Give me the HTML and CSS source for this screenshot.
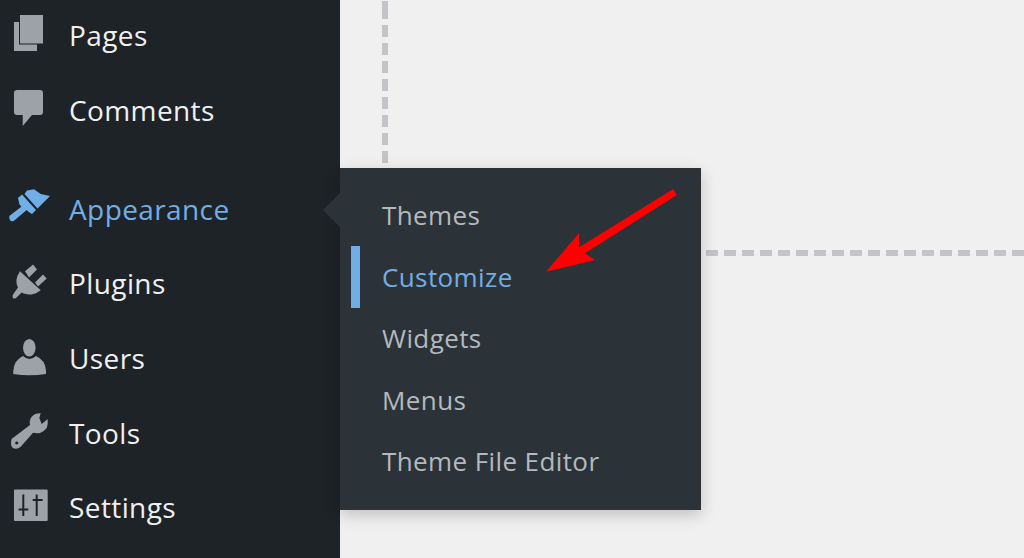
FILE: index.html

```html
<!DOCTYPE html>
<html lang="en">
<head>
  <meta charset="UTF-8">
  <title>Appearance menu</title>
  <link rel="stylesheet" href="styles.css">
</head>
<body>
  <div class="admin">
    <nav class="sidebar">
      <ul class="menu">
        <li class="item">
          <svg class="icon" viewBox="0 0 40 40"><path d="M10 0h23v28.500H10z"/><path d="M4 7h5v22.500h18V36H4z"/></svg>
          Pages
        </li>
        <li class="item sep">
          <svg class="icon" viewBox="0 0 40 40"><path d="M7 0h23q3 0 3 3v19q0 3-3 3H22L12.700 36V25H7q-3 0-3-3V3q0-3 3-3z"/></svg>
          Comments
        </li>
        <li class="item current">
          <svg class="icon" viewBox="0 0 40 40"><path d="M14.500 5L17 1.500 24 .3 30.700 5 40 7 27.500 19.500z"/><path d="M8 9l4-3.500L26 21l-4 4-3.300-2-2-2L4 31.700Q1 33 0 31q-1-2-.7-4l12-9.300-2-2.700z"/></svg>
          Appearance
        </li>
        <li class="item">
          <svg class="icon" viewBox="0 0 40 40"><path d="M15 8.200L23 1.500l4 5L19 14.500z"/><path d="M25 19.500l8-8 3.700 4-8.700 8z"/><path d="M10 8.200l20.700 19q-4.700 3.800-9 4.300-6.700 0-10-2L6 35q-2 1-3 0-1-2 0-3.500l5-7q-4-7.500 2-16.300z"/></svg>
          Plugins
        </li>
        <li class="item">
          <svg class="icon" viewBox="0 0 40 40"><ellipse cx="19.300" cy="9.800" rx="6.300" ry="8.800"/><path d="M13 18q6.500 6 13 0 9.500 4 10 15v3q-16.500 2.500-32.700 0v-3q.7-11 9.700-15z"/></svg>
          Users
        </li>
        <li class="item">
          <svg class="icon" viewBox="0 0 40 40"><path fill-rule="evenodd" d="M1.500 26L20 12q-1-5 1.700-8.300Q25 0 30.700.3L29.300 5l2.400 6 6-5q.5 5-1 9-2 3-6.700 5-3.500.5-7-.3L10.700 33.700Q7 37 3 35q-3-2-1.500-9zM6.700 28.400a1.600 1.600 0 1 0 .1 0z"/></svg>
          Tools
        </li>
        <li class="item">
          <svg class="icon" viewBox="0 0 40 40"><path fill-rule="evenodd" d="M5 2.500h31.700q1 0 1 1V33q0 1-1 1H5q-1 0-1-1V3.500q0-1 1-1zM12.300 7.500v14H8.500v2h3.800V29h2v-5.500h4v-2h-4v-14zM25.700 7.500V12h-3v2h3v15h2V14h5v-2h-5V7.500z"/></svg>
          Settings
        </li>
      </ul>
    </nav>
    <main class="content">
      <div class="dash-v"></div>
      <div class="dash-h"></div>
    </main>

    <div class="flyout">
      <ul class="submenu">
        <li class="subitem">Themes</li>
        <li class="subitem active">Customize</li>
        <li class="subitem">Widgets</li>
        <li class="subitem">Menus</li>
        <li class="subitem">Theme File Editor</li>
      </ul>
    </div>

    <svg class="red-arrow" viewBox="0 0 140 90"><polygon points="127.300,1 130.700,7 39,65.300 49,72 0,83.700 33,45.300 33,59.300"/></svg>
  </div>
</body>
</html>
```

FILE: styles.css

```css
* { box-sizing: border-box; }
html, body { margin: 0; height: 100%; overflow: hidden; }
body { font-family: "Open Sans", "Noto Sans", sans-serif; background-color: #f0f0f1; }
ul { list-style: none; margin: 0; padding: 0; }

.admin { position: relative; display: flex; height: 558px; }

.sidebar { width: 340px; flex: none; background-color: #1d2327; }
.menu { margin-top: -2px; }
.item {
  display: flex; align-items: center; height: 74.7px; padding-left: 69px;
  position: relative; color: #f0f0f1; font-size: 28px; letter-spacing: 0.4px;
}
.item.sep { margin-bottom: 24px; }
.item.current { color: #72aee6; }
.icon {
  position: absolute; left: 10px; top: 50%; width: 40px; height: 40px;
  transform: translateY(-50%); fill: #9ca2a7; overflow: visible;
}
.item.current .icon { fill: #72aee6; }

.content { position: relative; flex: 1; }
.dash-v {
  position: absolute; left: 42px; top: 0; width: 6px; height: 168px;
  background: repeating-linear-gradient(to bottom, #c3c4c7 0 12px, transparent 12px 18px) 0 7px;
}
.dash-h {
  position: absolute; left: 366px; top: 250px; right: 0; height: 6px;
  background: repeating-linear-gradient(to right, #c3c4c7 0 12px, transparent 12px 18px);
}

.flyout {
  position: absolute; left: 340px; top: 168px; width: 361px; height: 342px;
  padding: 16.5px 11px; background-color: #2c3338;
  box-shadow: 0 5px 15px rgba(0, 0, 0, 0.2);
}
.flyout::before {
  content: ""; position: absolute; left: -17px; top: 25px;
  border-style: solid; border-width: 17.5px 17px 17.5px 0;
  border-color: transparent #2c3338 transparent transparent;
}
.subitem {
  display: flex; align-items: center; height: 61.5px; padding-left: 22px;
  border-left: 9px solid transparent;
  color: #b4b9be; font-size: 26px; letter-spacing: 0.4px;
}
.subitem.active { color: #72aee6; border-left-color: #72aee6; }

.red-arrow {
  position: absolute; left: 546px; top: 188px; width: 140px; height: 90px; fill: #ff0000;
}
```
